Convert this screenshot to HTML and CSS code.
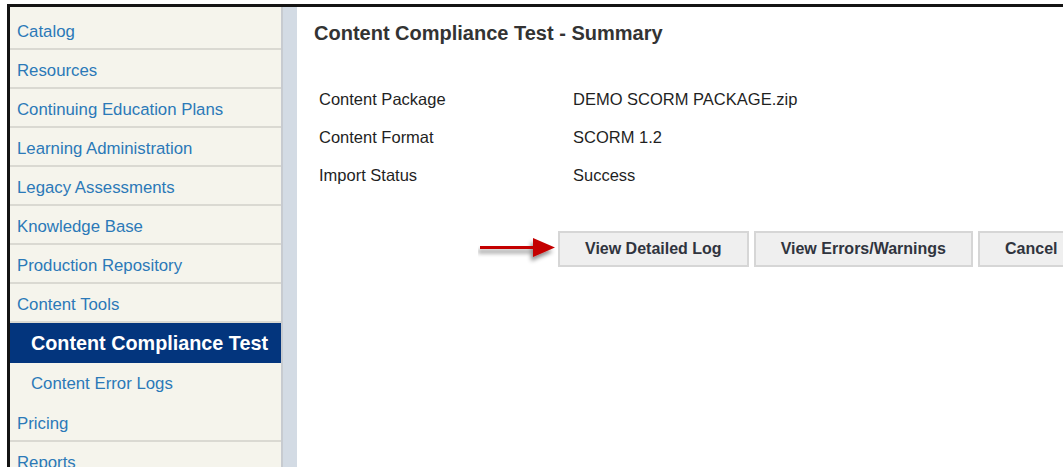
FILE: index.html
```html
<!DOCTYPE html>
<html lang="en">
<head>
<meta charset="utf-8">
<title>Content Compliance Test - Summary</title>
<link rel="stylesheet" href="styles.css">
</head>
<body>
<div class="frame">
  <nav class="sidebar">
    <a class="nav-item" href="#">Catalog</a>
    <a class="nav-item" href="#">Resources</a>
    <a class="nav-item" href="#">Continuing Education Plans</a>
    <a class="nav-item" href="#">Learning Administration</a>
    <a class="nav-item" href="#">Legacy Assessments</a>
    <a class="nav-item" href="#">Knowledge Base</a>
    <a class="nav-item" href="#">Production Repository</a>
    <a class="nav-item" href="#">Content Tools</a>
    <a class="nav-item sub active" href="#">Content Compliance Test</a>
    <a class="nav-item sub" href="#">Content Error Logs</a>
    <a class="nav-item" href="#">Pricing</a>
    <a class="nav-item" href="#">Reports</a>
  </nav>
  <div class="divider"></div>
  <main class="main">
    <h1 class="title">Content Compliance Test - Summary</h1>
    <dl class="details">
      <div class="detail-row"><dt>Content Package</dt><dd>DEMO SCORM PACKAGE.zip</dd></div>
      <div class="detail-row"><dt>Content Format</dt><dd>SCORM 1.2</dd></div>
      <div class="detail-row"><dt>Import Status</dt><dd>Success</dd></div>
    </dl>
    <div class="actions">
      <svg class="pointer" width="78" height="36" viewBox="0 0 78 36" aria-hidden="true">
        <defs>
          <filter id="arrow-shadow" x="-20%" y="-50%" width="140%" height="200%">
            <feDropShadow dx="-2" dy="4" stdDeviation="2" flood-color="#000" flood-opacity="0.45"/>
          </filter>
        </defs>
        <g filter="url(#arrow-shadow)" fill="#c40000">
          <rect x="2" y="15" width="56" height="3"/>
          <polygon points="55,7 77,16.5 55,26"/>
        </g>
      </svg>
      <button class="btn" type="button">View Detailed Log</button>
      <button class="btn" type="button">View Errors/Warnings</button>
      <button class="btn" type="button">Cancel</button>
    </div>
  </main>
</div>
</body>
</html>
```

FILE: styles.css
```css
html, body {
  margin: 0;
  padding: 0;
  background: #ffffff;
  overflow: hidden;
  height: 100%;
}

body {
  font-family: "Liberation Sans", Arial, sans-serif;
}

.frame {
  display: flex;
  margin: 4px 0 0 7px;
  border-top: 3px solid #141414;
  border-left: 3px solid #141414;
  height: calc(100% - 7px);
}

/* left navigation */
.sidebar {
  width: 271px;
  flex: none;
  background: #f5f4ec;
  padding-top: 4px;
  display: flex;
  flex-direction: column;
}

.nav-item {
  display: block;
  padding: 4px 0 0 7px;
  box-sizing: content-box;
  line-height: 33px;
  height: 33px;
  font-size: 16.8px;
  color: #2b79b8;
  text-decoration: none;
  border-bottom: 2px solid #dad9d2;
  white-space: nowrap;
  flex: none;
}

.nav-item.sub {
  padding-left: 21px;
  height: 34px;
  border-bottom-color: transparent;
}

.nav-item.active {
  background: #03357d;
  color: #ffffff;
  font-weight: bold;
  font-size: 19.8px;
  border-bottom-color: #03357d;
}

.divider {
  width: 14px;
  flex: none;
  background: #d3dbe4;
  border-left: 2px solid #c7cbd0;
}

/* summary panel */
.main {
  flex: 1;
  padding: 14px 0 0 17px;
  min-width: 0;
  white-space: nowrap;
}

.title {
  margin: 0;
  font-size: 20px;
  line-height: 24px;
  font-weight: bold;
  color: #333333;
}

.details {
  margin: 35px 0 0 5px;
  padding: 0;
}

.detail-row {
  display: flex;
  height: 38px;
  align-items: center;
}

.detail-row dt,
.detail-row dd {
  margin: 0;
  font-size: 16.5px;
  color: #1f1f1f;
}

.detail-row dt {
  width: 254px;
  flex: none;
}

.actions {
  display: flex;
  align-items: center;
  gap: 5px;
  margin: 37px 0 0 164px;
}

.pointer {
  flex: none;
  margin-right: -3px;
}

.btn {
  flex: none;
  height: 36px;
  padding: 0 25px;
  background: #efefef;
  border: 2px solid #d6d6d6;
  font-family: "Liberation Sans", Arial, sans-serif;
  font-size: 16px;
  font-weight: bold;
  color: #30343e;
  cursor: pointer;
}
```
